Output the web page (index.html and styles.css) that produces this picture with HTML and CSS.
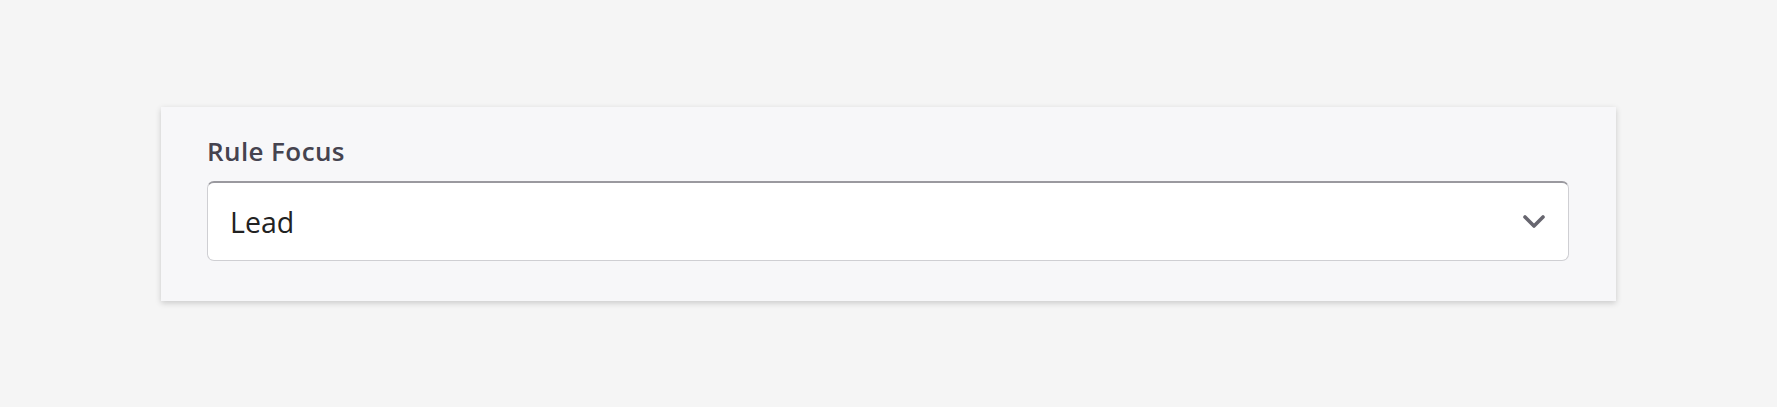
FILE: index.html
```html
<!DOCTYPE html>
<html lang="en">
<head>
    <meta charset="UTF-8">
    <meta name="viewport" content="width=device-width, initial-scale=1.0">
    <title>Rule Focus</title>
    <link rel="stylesheet" href="styles.css">
</head>
<body>
    <div class="panel">
        <label class="field-label" for="ruleFocus">Rule Focus</label>
        <div class="select-box">
            <span class="select-value" id="ruleFocus">Lead</span>
            <!-- chevron -->
            <svg class="chevron" width="22" height="14" viewBox="0 0 22 14">
                <path d="M2 2 L11 11 L20 2" fill="none" stroke="#67666f" stroke-width="3.6" stroke-linecap="round" stroke-linejoin="round"/>
            </svg>
        </div>
    </div>
</body>
</html>
```

FILE: styles.css
```css
body {
    margin: 0;
    background-color: #f5f5f5;
    font-family: "Open Sans", Lato, sans-serif;
    padding: 107px 161px 100px 161px;
}
.panel {
    background-color: #f7f7f9;
    padding: 26px 47px 40px 46px;
    box-shadow: 0 2px 6px rgba(0, 0, 0, 0.18);
    display: flex;
    flex-direction: column;
    gap: 12px;
}
.field-label {
    font-size: 26px;
    line-height: 36px;
    font-weight: 600;
    letter-spacing: 0.4px;
    color: #45434f;
}
.select-box {
    height: 77px;
    background-color: #fff;
    border: 1px solid #cfcfd3;
    border-top: 2px solid #9a999f;
    border-radius: 7px;
    display: flex;
    align-items: center;
    justify-content: space-between;
    padding: 0 23px 0 22px;
}
.select-value {
    font-size: 28.5px;
    color: #222;
}
.chevron {
    display: block;
}
```
